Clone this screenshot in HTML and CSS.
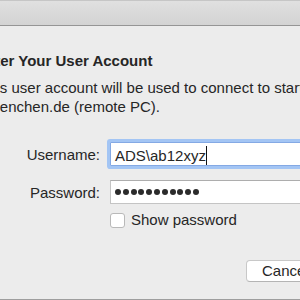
FILE: index.html
```html
<html>
<head>
	<title>Enter Your User Account</title>
	<link rel="stylesheet" href="styles.css">
</head>
<body>
	<div class="window">
		<div class="titlebar"></div>
		<div class="content">
			<h1 class="heading">Enter Your User Account</h1>
			<p class="intro">This user account will be used to connect to start a session on<br>muenchen.de (remote PC).</p>
			<form class="login" action="#">
				<label class="label">Username:</label>
				<div class="field focused">ADS\ab12xyz<span class="caret"></span></div>
				<label class="label">Password:</label>
				<div class="field dots">
					<span></span><span></span><span></span><span></span><span></span><span></span>
					<span></span><span></span><span></span><span></span><span></span>
				</div>
				<div class="check">
					<span class="box"></span>
					<span>Show password</span>
				</div>
			</form>
			<div class="buttons">
				<button class="btn">Cancel</button>
				<button class="btn">OK</button>
			</div>
		</div>
	</div>
</body>
</html>
```

FILE: styles.css
```css
*, *:before, *:after {
	box-sizing: border-box;
}
html, body {
	margin: 0;
	padding: 0;
	overflow: hidden;
}
body {
	font-family: "Liberation Sans", Arial, sans-serif;
	font-size: 15px;
	color: #262626;
	background: #ececec;
}
.window {
	height: 300px;
	border-bottom: 1px solid #9e9e9e;
}
.titlebar {
	height: 26px;
	background: linear-gradient(#e0e0e0, #d3d3d3);
	border-top: 1px solid #c6c6c6;
	border-bottom: 1px solid #959595;
}
.content {
	margin-left: -21px;
	width: 480px;
}
.heading {
	font-size: 15px;
	line-height: 18px;
	font-weight: bold;
	margin: 26px 0 0 -3px;
	white-space: nowrap;
}
.intro {
	line-height: 19px;
	margin: 8px 0 0;
	white-space: nowrap;
}
.login {
	display: grid;
	grid-template-columns: 121px 300px;
	column-gap: 10px;
	row-gap: 13px;
	align-items: start;
	margin: 26px 0 0;
}
.label {
	text-align: right;
	line-height: 24px;
	padding-top: 1px;
	white-space: nowrap;
}
.field {
	height: 24px;
	background: #fff;
	border: 1px solid #c4c4c4;
	border-top-color: #adadad;
	padding: 2px 4px 0;
	line-height: 22px;
	white-space: nowrap;
	overflow: hidden;
}
.focused {
	border-color: #84a9e4;
	border-radius: 1px;
	box-shadow: 0 0 0 3px #a3c5f4;
	overflow: visible;
}
.caret {
	display: inline-block;
	width: 1px;
	height: 19px;
	background: #111;
	vertical-align: -4px;
}
.dots {
	display: flex;
	align-items: center;
	gap: 1.8px;
	padding: 0 4px;
}
.dots span {
	width: 6px;
	height: 6px;
	border-radius: 50%;
	background: #2b2b2b;
}
.check {
	grid-column: 2;
	display: flex;
	align-items: center;
	gap: 6px;
	line-height: 16px;
	margin-top: -6px;
}
.box {
	width: 15px;
	height: 15px;
	background: #fff;
	border: 1px solid #b9b9b9;
	border-radius: 3px;
}
.buttons {
	display: flex;
	gap: 12px;
	padding-left: 267px;
	margin-top: 32px;
}
.btn {
	font-family: inherit;
	font-size: 15px;
	color: #262626;
	line-height: 20px;
	height: 22px;
	padding: 0 15px;
	background: #fff;
	border: 1px solid #c8c8c8;
	border-bottom-color: #b4b4b4;
	border-radius: 4px;
}
```
